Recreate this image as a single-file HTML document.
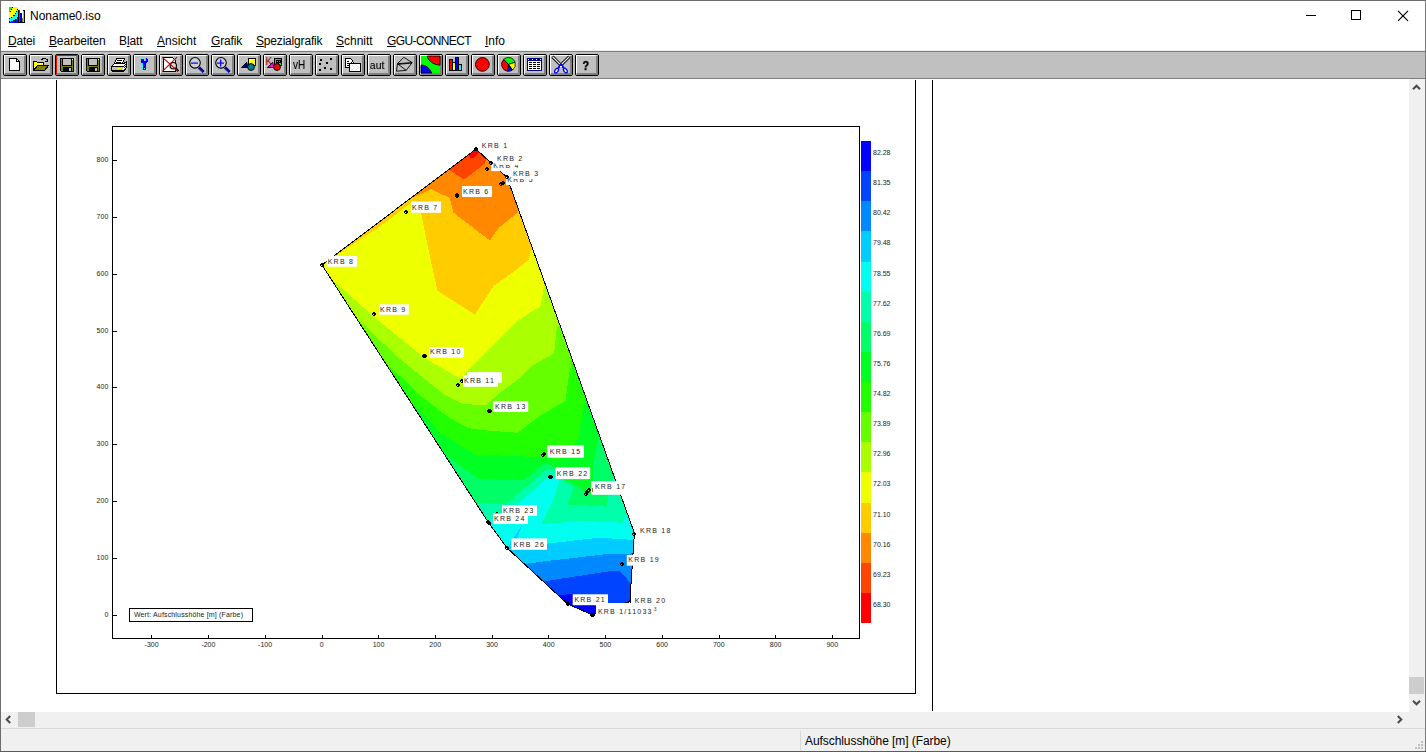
<!DOCTYPE html>
<html lang="de"><head><meta charset="utf-8"><title>Noname0.iso</title>
<style>
html,body{margin:0;padding:0;}
body{width:1426px;height:752px;overflow:hidden;background:#fff;position:relative;font-family:"Liberation Sans",sans-serif;}
#win{position:absolute;left:0;top:0;width:1426px;height:752px;background:#fff;overflow:hidden;}
.bd{background:#6b6b6b;z-index:9;}
#win>*{position:absolute;}
.abs{position:absolute;}
#title{left:1px;top:1px;width:1424px;height:30px;background:#fff;}
#title .t{position:absolute;left:29px;top:8px;font-size:12px;line-height:14px;color:#000;white-space:nowrap;}
#menu{left:0;top:31px;width:1425px;height:20px;background:#fff;font-size:12px;box-sizing:border-box;border-bottom:1px solid #efefef;}
#menu span{position:absolute;top:3px;line-height:14px;white-space:nowrap;color:#000;}
#menu u{text-decoration:underline;text-underline-offset:1px;}
#tb{left:1px;top:51px;width:1424px;height:28px;background:#c0c0c0;box-sizing:border-box;border-top:1px solid #7f7f7f;border-bottom:1px solid #7f7f7f;}
.b{position:absolute;top:2px;width:24px;height:22px;box-sizing:border-box;border:1px solid #000;border-radius:2px;background:#c0c0c0;}
.b i{position:absolute;left:0;top:0;width:22px;height:20px;box-sizing:border-box;border-left:1px solid #fff;border-top:1px solid #fff;border-right:2px solid #808080;border-bottom:2px solid #808080;}
.b svg{position:absolute;left:0;top:0;}
.b.hl{background:#b6c6c6;}
.b.hl i{border-left-color:#f00;border-top-color:#f00;}
.plot{left:0;top:80px;}
.kl{font-family:"Liberation Sans",sans-serif;font-size:7px;letter-spacing:1.25px;fill:#222;}
.al{font-family:"Liberation Sans",sans-serif;font-size:7px;fill:#222;}
#vs{left:1409px;top:79px;width:16px;height:633px;background:#f0f0f0;}
#hs{left:1px;top:712px;width:1408px;height:16px;background:#f0f0f0;}
#corner{left:1409px;top:712px;width:16px;height:16px;background:#f0f0f0;}
.th{position:absolute;background:#cdcdcd;}
#sb{left:1px;top:728px;width:1424px;height:23px;background:#f0f0f0;box-sizing:border-box;border-top:1px solid #d7d7d7;font-size:12px;}
#sb .s{position:absolute;left:804px;top:5px;letter-spacing:-0.07px;line-height:14px;white-space:nowrap;color:#000;}
#sb .sep{position:absolute;left:799px;top:2px;width:1px;height:19px;background:#d7d7d7;}
</style></head><body>
<div id="win">
<div class="bd" style="left:0;top:0;width:1px;height:752px"></div><div class="bd" style="left:0;top:0;width:1426px;height:1px"></div><div class="bd" style="left:1425px;top:0;width:1px;height:752px;background:#7a7a7a"></div><div class="bd" style="left:0;top:751px;width:1426px;height:1px;background:#5a5a5a"></div>
<div id="title"><svg class="abs" style="left:8px;top:6px" width="16" height="16" viewBox="0 0 16 16" shape-rendering="crispEdges">
<rect x="0" y="0" width="9" height="16" fill="#00f"/>
<path d="M0 0H9V10L7 12.5 4.5 13.8 0 15Z" fill="#0ff"/>
<path d="M0 0H9V2L8 3.5 7 5.5 5 8.5 2.5 10.5 0 12Z" fill="#ff0"/>
<path d="M0 0H3.5L0 6Z" fill="#0f0"/>
<g fill="#000"><rect x="3" y="0" width="1" height="1"/><rect x="2" y="2" width="1" height="1"/><rect x="1" y="4" width="1" height="1"/>
<rect x="8" y="2" width="1" height="1"/><rect x="7" y="4" width="1" height="1"/><rect x="6" y="6" width="1" height="1"/><rect x="4" y="8" width="2" height="1"/><rect x="2" y="10" width="1" height="1"/><rect x="0" y="11" width="1" height="1"/>
<rect x="8" y="10" width="1" height="1"/><rect x="6" y="12" width="1" height="1"/><rect x="4" y="13" width="2" height="1"/><rect x="0" y="14" width="1" height="1"/>
<rect x="9" y="3" width="1" height="13"/><rect x="9" y="15" width="7" height="1"/><rect x="12" y="6" width="1" height="10"/><rect x="11" y="6" width="1" height="1"/><rect x="14" y="3" width="2" height="1"/><rect x="15" y="3" width="1" height="13"/></g>
<rect x="10" y="3" width="1" height="12" fill="#f00"/><rect x="11" y="7" width="1" height="8" fill="#00f"/><rect x="13" y="11" width="1" height="4" fill="#808000"/><rect x="14" y="4" width="1" height="11" fill="#0ff"/>
</svg><span class="t">Noname0.iso</span><svg class="abs" style="left:1289px;top:-1px" width="134" height="30" viewBox="0 0 134 30">
<g stroke="#000" stroke-width="1" fill="none" shape-rendering="crispEdges"><line x1="16" y1="15.5" x2="26" y2="15.5"/><rect x="61.5" y="10.5" width="9" height="9"/></g>
<path d="M108 10.9L118 20.9M118 10.9L108 20.9" stroke="#000" stroke-width="1.15" fill="none"/></svg></div>
<div id="menu"><span style="left:8px;letter-spacing:-0.20px"><u>D</u>atei</span><span style="left:49px;letter-spacing:-0.15px"><u>B</u>earbeiten</span><span style="left:119px;letter-spacing:-0.10px">B<u>l</u>att</span><span style="left:157px;letter-spacing:0.00px"><u>A</u>nsicht</span><span style="left:211px;letter-spacing:-0.17px"><u>G</u>rafik</span><span style="left:256px;letter-spacing:-0.18px"><u>S</u>pezialgrafik</span><span style="left:336px;letter-spacing:0.00px"><u>S</u>chnitt</span><span style="left:387px;letter-spacing:-0.60px"><u>G</u>GU-CONNECT</span><span style="left:485px;letter-spacing:0.00px"><u>I</u>nfo</span></div>
<div id="tb"><div class="b" style="left:2px"><i></i><svg width="22" height="20" viewBox="1 1 22 20" shape-rendering="crispEdges"><path d="M6.5 4.5H13.5L16.5 7.5V16.5H6.5Z" fill="#fff" stroke="#000"/><path d="M13.5 4.5V7.5H16.5" fill="none" stroke="#000"/></svg></div><div class="b" style="left:28px"><i></i><svg width="22" height="20" viewBox="1 1 22 20" shape-rendering="crispEdges"><defs><pattern id="chk" width="2" height="2" patternUnits="userSpaceOnUse"><rect width="2" height="2" fill="#ff0"/><rect width="1" height="1" fill="#fff"/><rect x="1" y="1" width="1" height="1" fill="#fff"/></pattern></defs><path d="M4.5 16.5V7.5H7.5L8.5 8.5H14.5V11.5" fill="url(#chk)" stroke="#000"/><path d="M4.5 16.5L8.5 11.5H19.5L15.5 16.5Z" fill="#808000" stroke="#000"/><path d="M12.5 6.5L13.5 4.5H16.5L18.5 6.5" fill="none" stroke="#000"/><rect x="18" y="5" width="1" height="3" fill="#000"/><rect x="16" y="7" width="3" height="1" fill="#000"/></svg></div><div class="b hl" style="left:54px"><i></i><svg width="22" height="20" viewBox="1 1 22 20" shape-rendering="crispEdges"><path d="M5.5 4.5H18.5V17.5H6.5L5.5 16.5Z" fill="#808000" stroke="#000"/><rect x="7" y="5" width="10" height="7" fill="#000"/><rect x="8" y="5" width="8" height="6" fill="#c0c0c0"/><rect x="8" y="13" width="9" height="4" fill="#000"/><rect x="14" y="14" width="2" height="3" fill="#c0c0c0"/><rect x="17" y="5" width="1" height="1" fill="#fff"/></svg></div><div class="b" style="left:80px"><i></i><svg width="22" height="20" viewBox="1 1 22 20" shape-rendering="crispEdges"><path d="M5.5 4.5H18.5V17.5H6.5L5.5 16.5Z" fill="#808000" stroke="#000"/><rect x="7" y="5" width="10" height="7" fill="#000"/><rect x="8" y="5" width="8" height="6" fill="#c0c0c0"/><rect x="8" y="13" width="9" height="4" fill="#000"/><rect x="14" y="14" width="2" height="3" fill="#c0c0c0"/><rect x="17" y="5" width="1" height="1" fill="#fff"/></svg></div><div class="b" style="left:106px"><i></i><svg width="22" height="20" viewBox="1 1 22 20" shape-rendering="crispEdges"><path d="M7.5 9.5L9.5 4.5H17.5L15.5 9.5Z" fill="#fff" stroke="#000"/><rect x="10" y="6" width="5" height="1" fill="#000"/><rect x="9" y="8" width="5" height="1" fill="#000"/><path d="M4.5 12.5L7.5 9.5H16.5L19.5 7.5V13.5L16.5 17.5H5.5L4.5 16.5Z" fill="#fff" stroke="#000"/><rect x="5" y="12" width="12" height="1" fill="#000"/><rect x="5" y="13" width="11" height="3" fill="#c0c0c0"/><rect x="11" y="14" width="3" height="1" fill="#ff0"/><rect x="5" y="16" width="12" height="1" fill="#000"/><rect x="17" y="9" width="1" height="1" fill="#000"/><rect x="18" y="10" width="1" height="1" fill="#000"/><rect x="17" y="11" width="1" height="1" fill="#000"/><rect x="18" y="12" width="1" height="1" fill="#000"/><rect x="17" y="13" width="1" height="1" fill="#000"/><rect x="17" y="15" width="1" height="1" fill="#000"/></svg></div><div class="b" style="left:132px"><i></i><svg width="22" height="20" viewBox="1 1 22 20" shape-rendering="crispEdges"><rect x="8" y="4" width="2" height="4" fill="#00f"/><rect x="12" y="4" width="2" height="4" fill="#00f"/><rect x="8" y="7" width="6" height="2" fill="#00f"/><rect x="10" y="9" width="2" height="4" fill="#00f"/><rect x="8" y="4" width="2" height="1" fill="#0ff"/><rect x="12" y="4" width="1" height="3" fill="#0ff"/><rect x="9" y="9" width="1" height="7" fill="#0ff"/><rect x="14" y="5" width="1" height="3" fill="#000"/><rect x="12" y="9" width="1" height="7" fill="#000"/><rect x="10" y="13" width="2" height="3" fill="#000"/><rect x="10" y="5" width="1" height="2" fill="#000"/><rect x="11" y="14" width="1" height="1" fill="#0ff"/></svg></div><div class="b" style="left:158px"><i></i><svg width="22" height="20" viewBox="1 1 22 20"><path d="M4.5 3.5H13.5L16.5 6.5V17.5H4.5Z" fill="#fff" stroke="#000" shape-rendering="crispEdges"/><circle cx="14.3" cy="11.7" r="3.2" fill="#d8d8d8" stroke="#000" stroke-width="1.2"/><path d="M16.5 14L19.3 17.3" stroke="#000" stroke-width="2.2" fill="none"/><rect x="12" y="10" width="1" height="1" fill="#0ff"/><rect x="13" y="9" width="1" height="1" fill="#0ff"/><rect x="14" y="13" width="1" height="1" fill="#0ff"/><path d="M3.2 3.2L19 17.3M18 3.2L3.2 17.6" stroke="#b00000" stroke-width="1.1" fill="none"/></svg></div><div class="b" style="left:184px"><i></i><svg width="22" height="20" viewBox="1 1 22 20"><circle cx="10" cy="8.8" r="5.3" fill="#cfcfcf" stroke="#000" stroke-width="1.1"/><path d="M14 13.6L18.6 18" stroke="#000080" stroke-width="3" fill="none"/><path d="M14.2 14.9L17.6 18.3" stroke="#6a6ad0" stroke-width="0.7" fill="none"/><rect x="6" y="8.5" width="7" height="1.2" fill="#00f"/></svg></div><div class="b" style="left:210px"><i></i><svg width="22" height="20" viewBox="1 1 22 20"><circle cx="10" cy="8.8" r="5.3" fill="#cfcfcf" stroke="#000" stroke-width="1.1"/><path d="M14 13.6L18.6 18" stroke="#000080" stroke-width="3" fill="none"/><path d="M14.2 14.9L17.6 18.3" stroke="#6a6ad0" stroke-width="0.7" fill="none"/><rect x="6" y="8.5" width="7" height="1.2" fill="#00f"/><rect x="9" y="5.5" width="1.3" height="7" fill="#00f"/></svg></div><div class="b" style="left:236px"><i></i><svg width="22" height="20" viewBox="1 1 22 20"><defs><pattern id="chk2" width="2" height="2" patternUnits="userSpaceOnUse"><rect width="2" height="2" fill="#ff0"/><rect width="1" height="1" fill="#fff"/><rect x="1" y="1" width="1" height="1" fill="#fff"/></pattern></defs><rect x="11.5" y="4.5" width="7" height="7" fill="url(#chk2)" stroke="#000" shape-rendering="crispEdges"/><path d="M4.5 13.5L9.7 8.3L11 13.5Z" fill="#000080" stroke="#000" stroke-width="0.9"/><circle cx="14" cy="13" r="3.4" fill="#008080" stroke="#000" stroke-width="1"/></svg></div><div class="b" style="left:262px"><i></i><svg width="22" height="20" viewBox="1 1 22 20"><rect x="11.5" y="4.5" width="7" height="7" fill="#0f0" stroke="#000" shape-rendering="crispEdges"/><g fill="#000" shape-rendering="crispEdges"><rect x="13" y="6" width="5" height="1"/><rect x="13" y="8" width="5" height="1"/><rect x="13" y="6" width="1" height="4"/><rect x="15" y="6" width="1" height="4"/><rect x="17" y="6" width="1" height="3"/></g><text x="2.6" y="10.6" font-family="Liberation Sans,sans-serif" font-size="10" fill="#a00000">K</text><path d="M4.5 13.5L9.7 8.3L11 13.5Z" fill="#f0f" stroke="#000" stroke-width="0.9"/><circle cx="14" cy="13" r="3.4" fill="#f00" stroke="#000" stroke-width="1"/></svg></div><div class="b" style="left:288px"><i></i><svg width="22" height="20" viewBox="1 1 22 20" style="will-change:transform"><text opacity="1" stroke="#000" stroke-width="0.12" x="3.9" y="14.7" font-family="Liberation Sans,sans-serif" font-size="12" fill="#000" textLength="12.2" lengthAdjust="spacingAndGlyphs">vH</text></svg></div><div class="b" style="left:314px"><i></i><svg width="22" height="20" viewBox="1 1 22 20" shape-rendering="crispEdges"><rect x="5" y="5" width="2" height="2" fill="#000"/><rect x="15" y="4" width="2" height="2" fill="#000"/><rect x="11" y="8" width="2" height="2" fill="#000"/><rect x="4" y="9" width="2" height="2" fill="#000"/><rect x="9" y="13" width="2" height="2" fill="#000"/><rect x="15" y="14" width="2" height="2" fill="#000"/><rect x="4" y="15" width="2" height="2" fill="#000"/></svg></div><div class="b" style="left:340px"><i></i><svg width="22" height="20" viewBox="1 1 22 20" shape-rendering="crispEdges"><path d="M4.5 4.5H9.5L11.5 6.5V13.5H4.5Z" fill="#fff" stroke="#000"/><rect x="6" y="7" width="2" height="1" fill="#000"/><rect x="6" y="9" width="2" height="1" fill="#000"/><rect x="6" y="11" width="2" height="1" fill="#000"/><rect x="11" y="7" width="1" height="2" fill="#000080"/><rect x="10" y="8" width="3" height="1" fill="#000080"/><rect x="11" y="8" width="1" height="1" fill="#fff"/><rect x="8.5" y="9.5" width="11" height="8" fill="#fff" stroke="#000"/><path d="M10.5 10.5L13.5 13.5L10.5 16.5M14.5 10.5L17.5 13.5L14.5 16.5" fill="none" stroke="#ff0" stroke-width="1" shape-rendering="auto"/></svg></div><div class="b" style="left:366px"><i></i><svg width="22" height="20" viewBox="1 1 22 20" style="will-change:transform"><text opacity="1" stroke="#000" stroke-width="0.12" x="2.8" y="14.7" font-family="Liberation Sans,sans-serif" font-size="11.5" fill="#000" textLength="14.6" lengthAdjust="spacingAndGlyphs">aut</text></svg></div><div class="b" style="left:392px"><i></i><svg width="22" height="20" viewBox="1 1 22 20"><path d="M10.8 3.3L19.2 8.6L4.5 9.7L10.8 3.3M4.5 9.7L3.5 17.2L13.2 16.4L19.2 8.6M4.5 9.7L13.2 16.4M4.8 10.4L19 9" fill="none" stroke="#000" stroke-width="0.9"/></svg></div><div class="b" style="left:418px"><i></i><svg width="22" height="20" viewBox="1 1 22 20"><rect x="2" y="2" width="19" height="17" fill="#0f0"/><path d="M8.3 2C8.5 4.6 10 6 12.4 8.1C14 9.6 17 10.8 21 11.1V2Z" fill="#f00" stroke="#000" stroke-width="0.9"/><path d="M2 11.1C5 11 7 12 8.5 13.2C10.8 15 11.5 17 12.9 19H2Z" fill="#00f" stroke="#000" stroke-width="0.9"/></svg></div><div class="b" style="left:444px"><i></i><svg width="22" height="20" viewBox="1 1 22 20" shape-rendering="crispEdges"><rect x="4.5" y="5.5" width="3" height="11" fill="#f00" stroke="#000"/><rect x="7.5" y="8.5" width="3" height="8" fill="#ff0" stroke="#000"/><rect x="10.5" y="3.5" width="3" height="13" fill="#00f" stroke="#000"/><rect x="13.5" y="10.5" width="3" height="6" fill="#0ff" stroke="#000"/></svg></div><div class="b" style="left:470px"><i></i><svg width="22" height="20" viewBox="1 1 22 20"><circle cx="11.4" cy="10.4" r="6.9" fill="#f00" stroke="#000" stroke-width="0.9"/></svg></div><div class="b" style="left:496px"><i></i><svg width="22" height="20" viewBox="1 1 22 20"><path d="M11.50 10.40L6.62 5.52A6.9 6.9 0 0 1 18.06 8.27Z" fill="#0f0" stroke="#000" stroke-width="0.8"/><path d="M11.50 10.40L18.06 8.27A6.9 6.9 0 0 1 15.46 16.05Z" fill="#ff0" stroke="#000" stroke-width="0.8"/><path d="M11.50 10.40L15.46 16.05A6.9 6.9 0 0 1 10.30 17.20Z" fill="#00f" stroke="#000" stroke-width="0.8"/><path d="M11.50 10.40L10.30 17.20A6.9 6.9 0 0 1 6.62 5.52Z" fill="#f00" stroke="#000" stroke-width="0.8"/></svg></div><div class="b" style="left:522px"><i></i><svg width="22" height="20" viewBox="1 1 22 20" shape-rendering="crispEdges"><rect x="4" y="4" width="15" height="13" fill="#000080"/><rect x="5" y="7" width="13" height="9" fill="#fff"/><rect x="5" y="5" width="1" height="1" fill="#fff"/><rect x="9" y="5" width="1" height="1" fill="#fff"/><rect x="13" y="5" width="1" height="1" fill="#fff"/><rect x="17" y="5" width="1" height="1" fill="#fff"/><rect x="6" y="8" width="3" height="1" fill="#000"/><rect x="10" y="8" width="3" height="1" fill="#000"/><rect x="14" y="8" width="3" height="1" fill="#000"/><rect x="6" y="10" width="3" height="1" fill="#000"/><rect x="10" y="10" width="3" height="1" fill="#000"/><rect x="14" y="10" width="3" height="1" fill="#000"/><rect x="6" y="12" width="3" height="1" fill="#000"/><rect x="10" y="12" width="3" height="1" fill="#000"/><rect x="14" y="12" width="3" height="1" fill="#000"/><rect x="6" y="14" width="3" height="1" fill="#000"/><rect x="10" y="14" width="3" height="1" fill="#000"/><rect x="14" y="14" width="3" height="1" fill="#000"/></svg></div><div class="b" style="left:548px"><i></i><svg width="22" height="20" viewBox="1 1 22 20"><path d="M3.4 2.6L12.4 11.6M20.4 2.6L11.4 11.6" stroke="#000" stroke-width="3" fill="none"/><path d="M3.7 2.9L12 11.2M20.1 2.9L11.8 11.2" stroke="#fff" stroke-width="1.2" fill="none"/><path d="M11.9 10.2L9.2 14.2M11.9 10.2L14.8 14.2" stroke="#00f" stroke-width="2" fill="none"/><ellipse cx="7.6" cy="16.6" rx="1.5" ry="2.6" transform="rotate(35 7.6 16.6)" fill="#fff" stroke="#00f" stroke-width="1.3"/><ellipse cx="16.4" cy="16.6" rx="1.5" ry="2.6" transform="rotate(-35 16.4 16.6)" fill="#fff" stroke="#00f" stroke-width="1.3"/><rect x="11" y="12" width="2" height="1" fill="#fff"/></svg></div><div class="b" style="left:574px"><i></i><svg width="22" height="20" viewBox="1 1 22 20" style="will-change:transform"><text opacity="1" stroke="#000" stroke-width="0.35" x="7.6" y="16" font-family="Liberation Sans,sans-serif" font-weight="bold" font-size="13" fill="#000" textLength="6.6" lengthAdjust="spacingAndGlyphs">?</text></svg></div></div>
<svg class="plot" width="1409" height="631" viewBox="0 80 1409 631">
<clipPath id="oc"><polygon points="476.0,149.0 491.0,163.0 507.0,177.3 634.5,533.5 633.9,540.0 629.9,601.4 592.2,614.7 567.8,604.2 507.0,547.9 488.3,522.3 322.0,265.0"/></clipPath>
<g clip-path="url(#oc)" shape-rendering="crispEdges">
<rect x="300" y="130" width="360" height="500" fill="#00ff22"/>
<polygon points="414.6,405.6 442.6,434.9 475.1,454.6 541.1,457.1 560.0,459.5 578.1,439.7 581.5,420.0 582.7,411.2 585.6,402.3 645.6,392.3 720.0,100.0 250.0,100.0 374.6,395.6" fill="#22ff00"/>
<polygon points="389.4,367.2 404.8,380.0 417.9,394.0 449.0,417.4 468.7,428.2 488.4,430.7 517.7,432.8 539.4,416.1 565.5,400.8 568.9,374.8 570.9,365.9 571.3,361.0 631.3,351.0 720.0,100.0 250.0,100.0 349.4,357.2" fill="#66ff00"/>
<polygon points="355.0,316.0 359.8,321.0 399.2,358.4 443.5,394.0 462.8,404.1 486.5,405.1 500.0,392.5 517.0,380.0 531.5,365.9 554.1,353.6 556.6,329.5 559.5,323.1 619.5,313.1 720.0,100.0 250.0,100.0 315.0,306.0" fill="#aaff00"/>
<polygon points="332.3,279.7 373.1,316.1 424.3,357.9 460.2,378.5 490.0,348.5 518.4,320.2 530.0,312.8 540.3,306.4 541.8,300.0 543.8,286.9 546.0,282.5 606.0,272.5 720.0,100.0 250.0,100.0 292.3,269.7" fill="#eeff00"/>
<polygon points="330.0,259.5 380.0,226.3 411.0,203.0 421.0,213.1 423.6,225.3 428.6,250.0 437.3,290.7 474.8,314.6 493.8,286.0 514.0,271.5 528.7,260.0 530.3,252.0 533.5,247.0 593.5,237.0 720.0,100.0 250.0,100.0 290.0,249.5" fill="#ffcc00"/>
<polygon points="409.0,199.5 431.0,189.1 449.7,197.9 453.4,212.6 490.0,240.6 498.7,227.8 517.2,212.9 519.5,210.2 579.5,200.2 720.0,100.0 250.0,100.0 369.0,189.5" fill="#ff8800"/>
<polygon points="448.8,169.5 464.0,179.5 478.6,168.5 484.7,163.5 485.9,160.1 487.0,159.3 547.0,149.3 720.0,100.0 250.0,100.0 408.8,159.5" fill="#ff4400"/>
<polygon points="468.5,154.7 470.7,158.4 474.0,157.9 478.6,152.8 479.5,152.3 539.5,142.3 720.0,100.0 250.0,100.0 428.5,144.7" fill="#ff0000"/>
<polygon points="444.6,454.6 479.1,479.2 524.3,480.2 545.2,462.4 555.3,467.6 563.8,479.4 574.6,484.0 591.0,495.0 593.0,481.0 593.3,466.3 595.8,449.5 598.7,439.7 658.7,444.7 720.0,700.0 250.0,700.0 404.6,459.6" fill="#00ff66"/>
<polygon points="480.7,503.3 506.3,503.8 548.0,468.4 556.0,471.0 563.0,480.5 574.0,487.7 567.7,504.6 607.1,506.6 608.0,495.7 612.5,477.1 672.5,482.1 720.0,700.0 250.0,700.0 440.7,508.3" fill="#00ffaa"/>
<polygon points="488.3,522.5 518.1,503.8 549.9,475.3 559.6,481.1 557.0,488.7 552.0,502.1 541.7,524.0 586.4,520.8 594.3,521.3 622.8,522.8 624.8,517.4 684.8,522.4 720.0,700.0 250.0,700.0 448.3,527.5" fill="#00ffee"/>
<polygon points="509.5,550.5 547.1,543.6 594.7,538.2 599.2,537.6 633.8,540.0 693.8,545.0 720.0,700.0 250.0,700.0 469.5,555.5" fill="#00ccff"/>
<polygon points="524.0,564.0 549.8,560.7 586.4,556.5 611.3,553.5 626.3,554.5 633.0,553.0 693.0,558.0 720.0,700.0 250.0,700.0 484.0,569.0" fill="#0088ff"/>
<polygon points="543.2,581.5 569.8,577.3 608.0,571.5 619.6,570.7 626.3,578.1 630.4,583.1 690.4,588.1 720.0,700.0 250.0,700.0 503.2,586.5" fill="#0044ff"/>
<polygon points="557.3,594.8 573.1,594.3 597.0,599.0 600.0,612.0 600.0,640.0 540.0,640.0" fill="#0000ff"/>
<polygon points="507.0,547.9 522.5,524.0 517.5,538.0 511.5,549.0" fill="#00ccff"/>
</g>
<polygon points="476.0,149.0 491.0,163.0 507.0,177.3 634.5,533.5 633.9,540.0 629.9,601.4 592.2,614.7 567.8,604.2 507.0,547.9 488.3,522.3 322.0,265.0" fill="none" stroke="#000" stroke-width="1" shape-rendering="crispEdges"/>
<rect x="467" y="372.1" width="34.9" height="10.7" fill="#fff"/>
<path d="M461 379h2v1h1v2h-1v1h-2v-1h-1v-2h1zM461 381h1v1h-1z" fill="#000" fill-rule="evenodd" shape-rendering="crispEdges"/>
<rect x="491.1" y="160.0" width="29.9" height="11.1" fill="#fff"/>
<text x="493.2" y="167.8" class="kl">KRB 4</text>
<path d="M486 167h2v1h1v2h-1v1h-2v-1h-1v-2h1zM486 169h1v1h-1z" fill="#000" fill-rule="evenodd" shape-rendering="crispEdges"/>
<rect x="506.0" y="174.0" width="30.0" height="11.0" fill="#fff"/>
<text x="507.3" y="181.7" class="kl">KRB 5</text>
<path d="M500 182h2v1h1v2h-1v1h-2v-1h-1v-2h1zM500 184h1v1h-1z" fill="#000" fill-rule="evenodd" shape-rendering="crispEdges"/>
<rect x="480.6" y="140.2" width="30.1" height="11.1" fill="#fff"/>
<text x="481.8" y="148.0" class="kl">KRB 1</text>
<path d="M475 147h2v1h1v2h-1v1h-2v-1h-1v-2h1zM475 149h1v1h-1z" fill="#000" fill-rule="evenodd" shape-rendering="crispEdges"/>
<rect x="495.8" y="153.0" width="29.7" height="12.0" fill="#fff"/>
<text x="497.0" y="160.8" class="kl">KRB 2</text>
<path d="M490 161h2v1h1v2h-1v1h-2v-1h-1v-2h1zM490 163h1v1h-1z" fill="#000" fill-rule="evenodd" shape-rendering="crispEdges"/>
<rect x="511.7" y="168.0" width="30.3" height="11.1" fill="#fff"/>
<text x="512.9" y="175.7" class="kl">KRB 3</text>
<path d="M506 175h2v1h1v2h-1v1h-2v-1h-1v-2h1zM506 177h1v1h-1z" fill="#000" fill-rule="evenodd" shape-rendering="crispEdges"/>
<rect x="462.0" y="186.0" width="30.0" height="11.0" fill="#fff"/>
<text x="463.0" y="193.7" class="kl">KRB 6</text>
<path d="M456 193h2v1h1v2h-1v1h-2v-1h-1v-2h1zM456 195h1v1h-1z" fill="#000" fill-rule="evenodd" shape-rendering="crispEdges"/>
<rect x="411.0" y="201.5" width="30.0" height="11.3" fill="#fff"/>
<text x="412.0" y="209.5" class="kl">KRB 7</text>
<path d="M405 210h2v1h1v2h-1v1h-2v-1h-1v-2h1zM405 212h1v1h-1z" fill="#000" fill-rule="evenodd" shape-rendering="crispEdges"/>
<rect x="326.7" y="256.0" width="30.3" height="10.8" fill="#fff"/>
<text x="327.7" y="263.5" class="kl">KRB 8</text>
<path d="M321 263h2v1h1v2h-1v1h-2v-1h-1v-2h1zM321 265h1v1h-1z" fill="#000" fill-rule="evenodd" shape-rendering="crispEdges"/>
<rect x="379.0" y="304.3" width="29.8" height="10.5" fill="#fff"/>
<text x="380.0" y="311.5" class="kl">KRB 9</text>
<path d="M373 312h2v1h1v2h-1v1h-2v-1h-1v-2h1zM373 314h1v1h-1z" fill="#000" fill-rule="evenodd" shape-rendering="crispEdges"/>
<rect x="429.0" y="347.0" width="35.0" height="10.6" fill="#fff"/>
<text x="430.0" y="354.3" class="kl">KRB 10</text>
<path d="M423 354h2v1h1v2h-1v1h-2v-1h-1v-2h1zM423 356h1v1h-1z" fill="#000" fill-rule="evenodd" shape-rendering="crispEdges"/>
<rect x="463.0" y="375.2" width="35.0" height="11.6" fill="#fff"/>
<text x="464.0" y="382.8" class="kl">KRB 11</text>
<path d="M457 383h2v1h1v2h-1v1h-2v-1h-1v-2h1zM457 385h1v1h-1z" fill="#000" fill-rule="evenodd" shape-rendering="crispEdges"/>
<rect x="493.0" y="401.2" width="35.2" height="10.8" fill="#fff"/>
<text x="495.0" y="408.7" class="kl">KRB 13</text>
<path d="M488 409h2v1h1v2h-1v1h-2v-1h-1v-2h1zM488 411h1v1h-1z" fill="#000" fill-rule="evenodd" shape-rendering="crispEdges"/>
<rect x="547.3" y="445.3" width="36.7" height="12.4" fill="#fff"/>
<text x="549.8" y="453.6" class="kl">KRB 15</text>
<path d="M542 453h2v1h1v2h-1v1h-2v-1h-1v-2h1zM542 455h1v1h-1z" fill="#000" fill-rule="evenodd" shape-rendering="crispEdges"/>
<rect x="555.5" y="467.3" width="34.7" height="11.8" fill="#fff"/>
<text x="556.8" y="475.8" class="kl">KRB 22</text>
<path d="M549 475h2v1h1v2h-1v1h-2v-1h-1v-2h1zM549 477h1v1h-1z" fill="#000" fill-rule="evenodd" shape-rendering="crispEdges"/>
<rect x="591.0" y="481.2" width="33.0" height="13.6" fill="#fff"/>
<text x="594.9" y="489.4" class="kl">KRB 17</text>
<path d="M586 490h2v1h1v2h-1v1h-2v-1h-1v-2h1zM586 492h1v1h-1z" fill="#000" fill-rule="evenodd" shape-rendering="crispEdges"/>
<rect x="502.0" y="505.3" width="35.0" height="10.5" fill="#fff"/>
<text x="503.0" y="512.5" class="kl">KRB 23</text>
<path d="M496 512h2v1h1v2h-1v1h-2v-1h-1v-2h1zM496 514h1v1h-1z" fill="#000" fill-rule="evenodd" shape-rendering="crispEdges"/>
<rect x="493.0" y="513.3" width="35.0" height="10.7" fill="#fff"/>
<text x="494.0" y="520.7" class="kl">KRB 24</text>
<path d="M487 520h2v1h1v2h-1v1h-2v-1h-1v-2h1zM487 522h1v1h-1z" fill="#000" fill-rule="evenodd" shape-rendering="crispEdges"/>
<rect x="511.3" y="538.4" width="35.7" height="11.4" fill="#fff"/>
<text x="513.5" y="546.5" class="kl">KRB 26</text>
<path d="M506 546h2v1h1v2h-1v1h-2v-1h-1v-2h1zM506 548h1v1h-1z" fill="#000" fill-rule="evenodd" shape-rendering="crispEdges"/>
<rect x="639.0" y="525.0" width="31.0" height="11.0" fill="#fff"/>
<text x="640.0" y="532.7" class="kl">KRB 18</text>
<path d="M633 532h2v1h1v2h-1v1h-2v-1h-1v-2h1zM633 534h1v1h-1z" fill="#000" fill-rule="evenodd" shape-rendering="crispEdges"/>
<rect x="626.8" y="554.9" width="32.7" height="10.8" fill="#fff"/>
<text x="628.3" y="562.4" class="kl">KRB 19</text>
<path d="M621 562h2v1h1v2h-1v1h-2v-1h-1v-2h1zM621 564h1v1h-1z" fill="#000" fill-rule="evenodd" shape-rendering="crispEdges"/>
<rect x="572.7" y="594.3" width="35.3" height="10.9" fill="#fff"/>
<text x="574.4" y="601.9" class="kl">KRB 21</text>
<path d="M567 602h2v1h1v2h-1v1h-2v-1h-1v-2h1zM567 604h1v1h-1z" fill="#000" fill-rule="evenodd" shape-rendering="crispEdges"/>
<path d="M629 600h2v1h1v2h-1v1h-2v-1h-1v-2h1zM629 602h1v1h-1z" fill="#000" fill-rule="evenodd" shape-rendering="crispEdges"/>
<rect x="631.0" y="594.0" width="37.0" height="12.0" fill="#fff"/>
<text x="634.7" y="602.9" class="kl">KRB 20</text>
<rect x="596.0" y="603.0" width="57.0" height="14.0" fill="#fff"/>
<text x="597.9" y="613.8" class="kl">KRB 1/11033</text>
<path d="M591 613h2v1h1v2h-1v1h-2v-1h-1v-2h1zM591 615h1v1h-1z" fill="#000" fill-rule="evenodd" shape-rendering="crispEdges"/>
<text x="653.8" y="611" font-family="Liberation Sans,sans-serif" font-size="5" fill="#444">3</text>
<rect x="592" y="488" width="1" height="4" fill="#c8643c" shape-rendering="crispEdges"/>
<path d="M489 409h2v1h1v2h-1v1h-2v-1h-1v-2h1zM489 411h1v1h-1z" fill="#000" fill-rule="evenodd" shape-rendering="crispEdges"/>
<path d="M588 488h2v1h1v2h-1v1h-2v-1h-1v-2h1zM588 490h1v1h-1z" fill="#000" fill-rule="evenodd" shape-rendering="crispEdges"/>
<path d="M585 492h2v1h1v2h-1v1h-2v-1h-1v-2h1zM585 494h1v1h-1z" fill="#000" fill-rule="evenodd" shape-rendering="crispEdges"/>
<path d="M543 452h2v1h1v2h-1v1h-2v-1h-1v-2h1zM543 454h1v1h-1z" fill="#000" fill-rule="evenodd" shape-rendering="crispEdges"/>
<path d="M424 354h2v1h1v2h-1v1h-2v-1h-1v-2h1zM424 356h1v1h-1z" fill="#000" fill-rule="evenodd" shape-rendering="crispEdges"/>
<path d="M502 181h2v1h1v2h-1v1h-2v-1h-1v-2h1zM502 183h1v1h-1z" fill="#000" fill-rule="evenodd" shape-rendering="crispEdges"/>
<path d="M456 194h2v1h1v2h-1v1h-2v-1h-1v-2h1zM456 196h1v1h-1z" fill="#000" fill-rule="evenodd" shape-rendering="crispEdges"/>
<path d="M550 475h2v1h1v2h-1v1h-2v-1h-1v-2h1zM550 477h1v1h-1z" fill="#000" fill-rule="evenodd" shape-rendering="crispEdges"/>
<path d="M488 521h2v1h1v2h-1v1h-2v-1h-1v-2h1zM488 523h1v1h-1z" fill="#000" fill-rule="evenodd" shape-rendering="crispEdges"/>
<path d="M592 613h2v1h1v2h-1v1h-2v-1h-1v-2h1zM592 615h1v1h-1z" fill="#000" fill-rule="evenodd" shape-rendering="crispEdges"/>
<g shape-rendering="crispEdges" stroke="#000" stroke-width="1" fill="none">
<rect x="112.5" y="126.5" width="747" height="512"/>
<line x1="113" y1="615.5" x2="117" y2="615.5"/>
<line x1="113" y1="558.5" x2="117" y2="558.5"/>
<line x1="113" y1="501.5" x2="117" y2="501.5"/>
<line x1="113" y1="444.5" x2="117" y2="444.5"/>
<line x1="113" y1="387.5" x2="117" y2="387.5"/>
<line x1="113" y1="331.5" x2="117" y2="331.5"/>
<line x1="113" y1="274.5" x2="117" y2="274.5"/>
<line x1="113" y1="217.5" x2="117" y2="217.5"/>
<line x1="113" y1="160.5" x2="117" y2="160.5"/>
<line x1="151.5" y1="638" x2="151.5" y2="635"/>
<line x1="208.5" y1="638" x2="208.5" y2="635"/>
<line x1="265.5" y1="638" x2="265.5" y2="635"/>
<line x1="322.5" y1="638" x2="322.5" y2="635"/>
<line x1="378.5" y1="638" x2="378.5" y2="635"/>
<line x1="435.5" y1="638" x2="435.5" y2="635"/>
<line x1="492.5" y1="638" x2="492.5" y2="635"/>
<line x1="548.5" y1="638" x2="548.5" y2="635"/>
<line x1="605.5" y1="638" x2="605.5" y2="635"/>
<line x1="662.5" y1="638" x2="662.5" y2="635"/>
<line x1="719.5" y1="638" x2="719.5" y2="635"/>
<line x1="775.5" y1="638" x2="775.5" y2="635"/>
<line x1="832.5" y1="638" x2="832.5" y2="635"/>
<path d="M56.5 80 V693.5 H915.5 V80"/>
<line x1="932.5" y1="80" x2="932.5" y2="711"/>
<rect x="129.5" y="608.5" width="123" height="13"/>
</g>
<text x="108.3" y="617.3" class="al" text-anchor="end">0</text>
<text x="108.3" y="560.3" class="al" text-anchor="end">100</text>
<text x="108.3" y="503.3" class="al" text-anchor="end">200</text>
<text x="108.3" y="446.3" class="al" text-anchor="end">300</text>
<text x="108.3" y="389.3" class="al" text-anchor="end">400</text>
<text x="108.3" y="333.3" class="al" text-anchor="end">500</text>
<text x="108.3" y="276.3" class="al" text-anchor="end">600</text>
<text x="108.3" y="219.3" class="al" text-anchor="end">700</text>
<text x="108.3" y="162.3" class="al" text-anchor="end">800</text>
<text x="151.6" y="646.8" class="al" text-anchor="middle">-300</text>
<text x="208.4" y="646.8" class="al" text-anchor="middle">-200</text>
<text x="265.1" y="646.8" class="al" text-anchor="middle">-100</text>
<text x="321.8" y="646.8" class="al" text-anchor="middle">0</text>
<text x="378.5" y="646.8" class="al" text-anchor="middle">100</text>
<text x="435.2" y="646.8" class="al" text-anchor="middle">200</text>
<text x="492.0" y="646.8" class="al" text-anchor="middle">300</text>
<text x="548.7" y="646.8" class="al" text-anchor="middle">400</text>
<text x="605.4" y="646.8" class="al" text-anchor="middle">500</text>
<text x="662.1" y="646.8" class="al" text-anchor="middle">600</text>
<text x="718.8" y="646.8" class="al" text-anchor="middle">700</text>
<text x="775.6" y="646.8" class="al" text-anchor="middle">800</text>
<text x="832.3" y="646.8" class="al" text-anchor="middle">900</text>
<text x="133.9" y="617.1" class="al" letter-spacing="0.16">Wert: Aufschlusshöhe [m] (Farbe)</text>
<g shape-rendering="crispEdges">
<rect x="861" y="141" width="10" height="30" fill="#0000ff"/>
<rect x="861" y="171" width="10" height="30" fill="#0044ff"/>
<rect x="861" y="201" width="10" height="30" fill="#0088ff"/>
<rect x="861" y="231" width="10" height="31" fill="#00ccff"/>
<rect x="861" y="262" width="10" height="30" fill="#00ffee"/>
<rect x="861" y="292" width="10" height="30" fill="#00ffaa"/>
<rect x="861" y="322" width="10" height="30" fill="#00ff66"/>
<rect x="861" y="352" width="10" height="30" fill="#00ff22"/>
<rect x="861" y="382" width="10" height="30" fill="#22ff00"/>
<rect x="861" y="412" width="10" height="30" fill="#66ff00"/>
<rect x="861" y="442" width="10" height="30" fill="#aaff00"/>
<rect x="861" y="472" width="10" height="31" fill="#eeff00"/>
<rect x="861" y="503" width="10" height="30" fill="#ffcc00"/>
<rect x="861" y="533" width="10" height="30" fill="#ff8800"/>
<rect x="861" y="563" width="10" height="30" fill="#ff4400"/>
<rect x="861" y="593" width="10" height="30" fill="#ff0000"/>
</g>
<text x="873" y="155.0" class="al">82.28</text>
<text x="873" y="185.1" class="al">81.35</text>
<text x="873" y="215.3" class="al">80.42</text>
<text x="873" y="245.4" class="al">79.48</text>
<text x="873" y="275.5" class="al">78.55</text>
<text x="873" y="305.6" class="al">77.62</text>
<text x="873" y="335.8" class="al">76.69</text>
<text x="873" y="365.9" class="al">75.76</text>
<text x="873" y="396.0" class="al">74.82</text>
<text x="873" y="426.2" class="al">73.89</text>
<text x="873" y="456.3" class="al">72.96</text>
<text x="873" y="486.4" class="al">72.03</text>
<text x="873" y="516.6" class="al">71.10</text>
<text x="873" y="546.7" class="al">70.16</text>
<text x="873" y="576.8" class="al">69.23</text>
<text x="873" y="607.0" class="al">68.30</text>
</svg>
<div id="vs"><div class="abs" style="left:-1px;top:0"><svg width="17" height="17" viewBox="0 0 17 17"><path d="M5 10.2L8.5 6.7L12 10.2" stroke="#4a4a4a" stroke-width="2" fill="none"/></svg></div><div class="th" style="left:0;top:598px;width:15px;height:17px"></div><div class="abs" style="left:-1px;top:615px"><svg width="17" height="17" viewBox="0 0 17 17"><path d="M5 6.8L8.5 10.3L12 6.8" stroke="#4a4a4a" stroke-width="2" fill="none"/></svg></div></div>
<div id="hs"><div class="abs" style="left:-1px;top:-1px"><svg width="17" height="17" viewBox="0 0 17 17"><path d="M10.2 5L6.7 8.5L10.2 12" stroke="#4a4a4a" stroke-width="2" fill="none"/></svg></div><div class="th" style="left:17px;top:0;width:17px;height:15px"></div><div class="abs" style="left:1390px;top:-1px"><svg width="17" height="17" viewBox="0 0 17 17"><path d="M6.8 5L10.3 8.5L6.8 12" stroke="#4a4a4a" stroke-width="2" fill="none"/></svg></div></div>
<div id="corner"></div>
<div id="sb"><div class="sep"></div><span class="s">Aufschlusshöhe [m] (Farbe)</span>
<svg class="abs" style="left:1413px;top:12px" width="10" height="10" viewBox="0 0 10 10" shape-rendering="crispEdges"><g fill="#bfbfbf"><rect x="7" y="0" width="2" height="2"/><rect x="4" y="3" width="2" height="2"/><rect x="7" y="3" width="2" height="2"/><rect x="1" y="6" width="2" height="2"/><rect x="4" y="6" width="2" height="2"/><rect x="7" y="6" width="2" height="2"/></g></svg>
</div>
</div>
</body></html>
